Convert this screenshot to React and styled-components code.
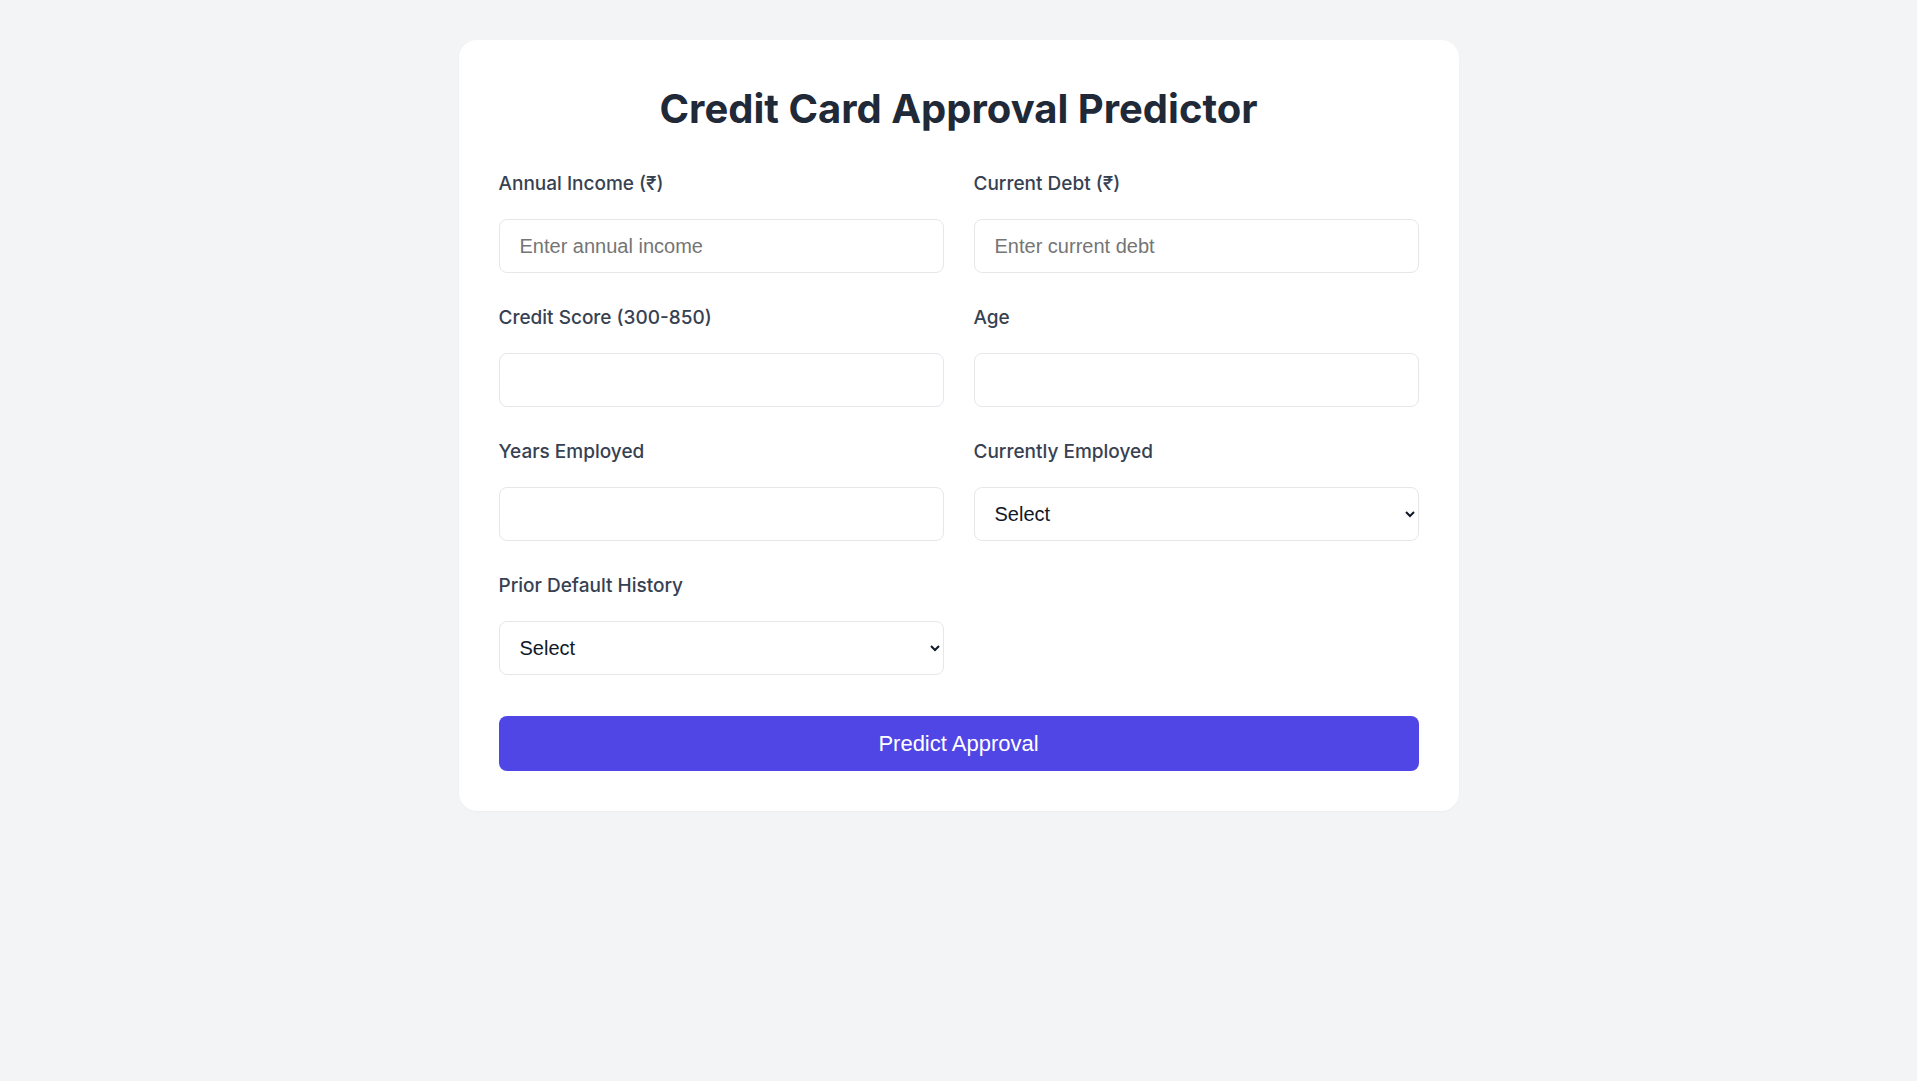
import React from 'react';
import styled, { createGlobalStyle } from 'styled-components';

const GlobalStyle = createGlobalStyle`
    body {
        margin: 0;
        background: #f3f4f6;
        font-family: Inter, "Noto Sans", sans-serif;
    }
`;

const Page = styled.div`
    min-height: 100vh;
    padding-top: 40px;
    box-sizing: border-box;
`;

const Card = styled.form`
    width: 1000px;
    margin: 0 auto;
    background: #ffffff;
    border-radius: 18px;
    padding: 40px;
    box-sizing: border-box;
    box-shadow: 0 1px 2px rgba(0, 0, 0, 0.03);
`;

const Title = styled.h1`
    margin: 5px 0 35px;
    font-size: 40px;
    line-height: 48px;
    font-weight: 700;
    color: #1f2937;
    text-align: center;
`;

const Grid = styled.div`
    display: grid;
    grid-template-columns: 1fr 1fr;
    column-gap: 30px;
    row-gap: 29px;
`;

const Field = styled.div`
    display: flex;
    flex-direction: column;
`;

const Label = styled.label`
    font-size: 19px;
    line-height: 28px;
    font-weight: 500;
    color: #374151;
    margin: 2px 0 21px;
`;

const controlStyles = `
    height: 54px;
    box-sizing: border-box;
    border: 1px solid #e5e7eb;
    border-radius: 8px;
    background: #ffffff;
    font-family: "Liberation Sans", Arial, sans-serif;
    font-size: 20px;
    color: #111827;
    outline: none;
`;

const Input = styled.input`
    ${controlStyles}
    padding: 0 20px;

    &::placeholder {
        color: #757575;
    }
`;

const Select = styled.select`
    ${controlStyles}
    padding: 0 10px 0 16px;
`;

const SubmitButton = styled.button`
    display: block;
    width: 100%;
    height: 55px;
    margin-top: 41px;
    border: none;
    border-radius: 8px;
    background: #4f46e5;
    color: #ffffff;
    font-family: "Liberation Sans", Arial, sans-serif;
    font-size: 22px;
    cursor: pointer;
`;

const fields = [
    { id: 'income', label: 'Annual Income (₹)', placeholder: 'Enter annual income' },
    { id: 'debt', label: 'Current Debt (₹)', placeholder: 'Enter current debt' },
    { id: 'score', label: 'Credit Score (300-850)' },
    { id: 'age', label: 'Age' },
    { id: 'years', label: 'Years Employed' },
    { id: 'employed', label: 'Currently Employed', select: true },
    { id: 'default', label: 'Prior Default History', select: true },
];

function App() {
    return (
        <Page>
            <GlobalStyle />
            <Card onSubmit={(e) => e.preventDefault()}>
                <Title>Credit Card Approval Predictor</Title>
                <Grid>
                    {fields.map((f) => (
                        <Field key={f.id}>
                            <Label htmlFor={f.id}>{f.label}</Label>
                            {f.select ? (
                                <Select id={f.id} defaultValue="">
                                    <option value="">Select</option>
                                    <option value="1">Yes</option>
                                    <option value="0">No</option>
                                </Select>
                            ) : (
                                <Input id={f.id} type="number" placeholder={f.placeholder} />
                            )}
                        </Field>
                    ))}
                </Grid>
                <SubmitButton type="submit">Predict Approval</SubmitButton>
            </Card>
        </Page>
    );
}

export default App;
